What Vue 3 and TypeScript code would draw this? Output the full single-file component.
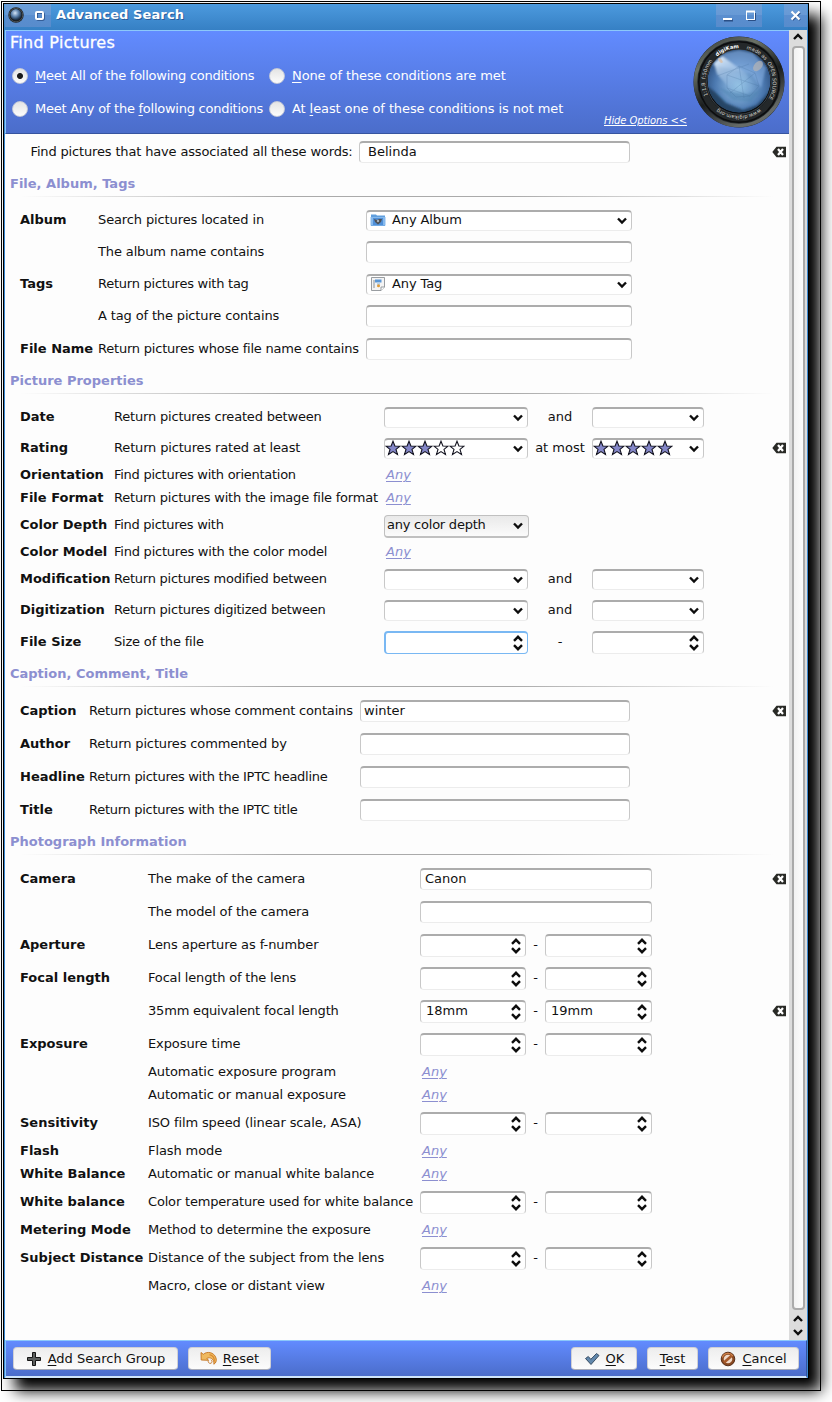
<script setup lang="ts">
type Kind = 'input' | 'combo' | 'button' | 'spin' | 'any' | 'range-combo' | 'range-spin'

interface Row {
  label?: string
  desc: string
  // letter tracking of the description, in hundredths of a pixel
  t: number
  kind: Kind
  h: number
  value?: string
  value2?: string
  sep?: string
  icon?: 'album' | 'tag'
  stars?: [number, number]
  clear?: boolean
  focus?: boolean
}

interface Section {
  id: string
  title: string
  rows: Row[]
}

const sections: Section[] = [
  {
    id: 'file',
    title: 'File, Album, Tags',
    rows: [
      { label: 'Album', desc: 'Search pictures located in', t: -12, kind: 'combo', h: 32, value: 'Any Album', icon: 'album' },
      { desc: 'The album name contains', t: -13, kind: 'input', h: 32 },
      { label: 'Tags', desc: 'Return pictures with tag', t: -25, kind: 'combo', h: 32, value: 'Any Tag', icon: 'tag' },
      { desc: 'A tag of the picture contains', t: -14, kind: 'input', h: 33 },
      { label: 'File Name', desc: 'Return pictures whose file name contains', t: -21, kind: 'input', h: 32 },
    ],
  },
  {
    id: 'props',
    title: 'Picture Properties',
    rows: [
      { label: 'Date', desc: 'Return pictures created between', t: -19, kind: 'range-combo', h: 31, sep: 'and' },
      { label: 'Rating', desc: 'Return pictures rated at least', t: -16, kind: 'range-combo', h: 27, sep: 'at most', stars: [3, 5], clear: true },
      { label: 'Orientation', desc: 'Find pictures with orientation', t: -27, kind: 'any', h: 23 },
      { label: 'File Format', desc: 'Return pictures with the image file format', t: -21, kind: 'any', h: 27 },
      { label: 'Color Depth', desc: 'Find pictures with', t: -28, kind: 'button', h: 27, value: 'any color depth' },
      { label: 'Color Model', desc: 'Find pictures with the color model', t: -23, kind: 'any', h: 27 },
      { label: 'Modification', desc: 'Return pictures modified between', t: -25, kind: 'range-combo', h: 31, sep: 'and' },
      { label: 'Digitization', desc: 'Return pictures digitized between', t: -24, kind: 'range-combo', h: 32, sep: 'and' },
      { label: 'File Size', desc: 'Size of the file', t: -19, kind: 'range-spin', h: 32, sep: '-', focus: true },
    ],
  },
  {
    id: 'caption',
    title: 'Caption, Comment, Title',
    rows: [
      { label: 'Caption', desc: 'Return pictures whose comment contains', t: -17, kind: 'input', h: 33, value: 'winter', clear: true },
      { label: 'Author', desc: 'Return pictures commented by', t: -14, kind: 'input', h: 33 },
      { label: 'Headline', desc: 'Return pictures with the IPTC headline', t: -27, kind: 'input', h: 33 },
      { label: 'Title', desc: 'Return pictures with the IPTC title', t: -28, kind: 'input', h: 32 },
    ],
  },
  {
    id: 'photo',
    title: 'Photograph Information',
    rows: [
      { label: 'Camera', desc: 'The make of the camera', t: -10, kind: 'input', h: 33, value: 'Canon', clear: true },
      { desc: 'The model of the camera', t: -13, kind: 'input', h: 33 },
      { label: 'Aperture', desc: 'Lens aperture as f-number', t: -8, kind: 'range-spin', h: 33, sep: '-' },
      { label: 'Focal length', desc: 'Focal length of the lens', t: -17, kind: 'range-spin', h: 33, sep: '-' },
      { desc: '35mm equivalent focal length', t: -18, kind: 'range-spin', h: 33, sep: '-', value: '18mm', value2: '19mm', clear: true },
      { label: 'Exposure', desc: 'Exposure time', t: -10, kind: 'range-spin', h: 28, sep: '-' },
      { desc: 'Automatic exposure program', t: -8, kind: 'any', h: 23 },
      { desc: 'Automatic or manual exposure', t: -10, kind: 'any', h: 28 },
      { label: 'Sensitivity', desc: 'ISO film speed (linear scale, ASA)', t: -12, kind: 'range-spin', h: 28, sep: '-' },
      { label: 'Flash', desc: 'Flash mode', t: -10, kind: 'any', h: 23 },
      { label: 'White Balance', desc: 'Automatic or manual white balance', t: -18, kind: 'any', h: 28 },
      { label: 'White balance', desc: 'Color temperature used for white balance', t: -18, kind: 'range-spin', h: 28, sep: '-' },
      { label: 'Metering Mode', desc: 'Method to determine the exposure', t: -12, kind: 'any', h: 28 },
      { label: 'Subject Distance', desc: 'Distance of the subject from the lens', t: -13, kind: 'range-spin', h: 28, sep: '-' },
      { desc: 'Macro, close or distant view', t: -18, kind: 'any', h: 28 },
    ],
  },
]

const starPath = 'M8 1.2 L9.9 6 L15 6.2 L11 9.4 L12.5 14.4 L8 11.6 L3.5 14.4 L5 9.4 L1 6.2 L6.1 6 Z'
</script>

<template>
  <div class="screen">
    <div class="outline"></div>
    <div class="window">
      <header class="titlebar">
        <div class="tb-group left">
          <svg width="16" height="16" viewBox="0 0 16 16">
            <defs>
              <radialGradient id="mini" cx="0.42" cy="0.36" r="0.6">
                <stop offset="0" stop-color="#d4e4f6" />
                <stop offset="0.55" stop-color="#5a80aa" />
                <stop offset="1" stop-color="#1c3048" />
              </radialGradient>
            </defs>
            <circle cx="8" cy="8" r="7.7" fill="#1b1f22" />
            <circle cx="8" cy="8" r="6.8" fill="none" stroke="#5d6468" stroke-width="0.7" />
            <circle cx="8" cy="7.6" r="5.6" fill="url(#mini)" />
          </svg>
          <svg class="sticky" width="10" height="10" viewBox="0 0 10 10">
            <rect x="2" y="2" width="7" height="7" rx="1" fill="none" stroke="#2a4f86" stroke-width="1.6" />
            <rect x="1" y="1" width="7" height="7" rx="1" fill="none" stroke="#fff" stroke-width="2" />
          </svg>
        </div>
        <span class="tb-title">Advanced Search</span>
        <div class="tb-group mid">
          <svg width="46" height="23" viewBox="0 0 46 23">
            <path d="M8 16.5H17" stroke="#2a4f86" stroke-width="2" />
            <path d="M7 15H16" stroke="#fff" stroke-width="2" />
            <path d="M32 16.5H39.500V9" stroke="#2a4f86" fill="none" />
            <rect x="30.500" y="7.500" width="8" height="8" fill="none" stroke="#fff" />
            <path d="M30 7.500H39" stroke="#fff" stroke-width="2" />
          </svg>
        </div>
        <div class="tb-group close">
          <svg width="23" height="23" viewBox="0 0 23 23">
            <path d="M8.500 8.500L16 16M16 8.500L8.500 16" stroke="#2a4f86" stroke-width="2.200" />
            <path d="M7.500 7.500L15.500 15.500M15.500 7.500L7.500 15.500" stroke="#fff" stroke-width="2.200" />
          </svg>
        </div>
      </header>

      <div class="body">
        <div class="main">
          <div class="head">
            <div class="head-left">
              <h1>Find Pictures</h1>
              <div class="radios">
                <span class="opt"><i class="radio on"></i><span class="tight"><u>M</u>eet All of the following conditions</span></span>
                <span class="opt"><i class="radio"></i><span><u>N</u>one of these conditions are met</span></span>
                <span class="opt"><i class="radio"></i><span class="tight">Meet Any of the <u>f</u>ollowing conditions</span></span>
                <span class="opt"><i class="radio"></i><span>At <u>l</u>east one of these conditions is not met</span></span>
              </div>
            </div>
            <a class="hide">Hide Options &lt;&lt;</a>
            <svg class="lens" width="94" height="94" viewBox="-47 -47 94 94">
              <defs>
                <linearGradient id="rim" x1="0" y1="0" x2="0.5" y2="1">
                  <stop offset="0" stop-color="#2e3335" />
                  <stop offset="0.3" stop-color="#6b7266" />
                  <stop offset="0.65" stop-color="#1a1d1e" />
                  <stop offset="1" stop-color="#666b68" />
                </linearGradient>
                <radialGradient id="glass" cx="0.5" cy="0.58" r="0.62">
                  <stop offset="0" stop-color="#93c3e4" />
                  <stop offset="0.3" stop-color="#78a5d2" />
                  <stop offset="0.62" stop-color="#4c79b0" />
                  <stop offset="0.85" stop-color="#34598a" />
                  <stop offset="1" stop-color="#1f3c5c" />
                </radialGradient>
                <linearGradient id="shine" x1="0.1" y1="0" x2="0.6" y2="1">
                  <stop offset="0" stop-color="#e6f2fd" />
                  <stop offset="1" stop-color="#8db8e4" stop-opacity="0" />
                </linearGradient>
                <filter id="soften" x="-20%" y="-20%" width="140%" height="140%"><feGaussianBlur stdDeviation="1.3" /></filter>
                <clipPath id="glassClip"><circle r="31.500" cy="-1" /></clipPath>
                <path id="ring" d="M0 33.800A33.800 33.800 0 1 1 0.010 33.800" />
                <path id="ring2" d="M0 -33.800A33.800 33.800 0 1 1 -0.010 -33.800" />
              </defs>
              <circle r="45.500" fill="#23282b" />
              <circle r="43.500" fill="none" stroke="url(#rim)" stroke-width="3.500" />
              <circle r="41" fill="#0c0d0e" />
              <circle r="39.500" fill="#24282a" />
              <circle r="33" fill="#0b0d0f" />
              <circle r="32.300" fill="none" stroke="#495157" stroke-width="0.800" />
              <g clip-path="url(#glassClip)">
                <circle r="31.500" cy="-1" fill="url(#glass)" />
                <g filter="url(#soften)">
                  <path d="M-27 -17L-14 -29L0 -32L14 -29L27 -14L22 6L12 -8L-3 -12Z" fill="#8ab4e8" opacity="0.550" />
                  <path d="M-25 -19L-17 -26L8 -8L10 14L-8 8L-22 -8Z" fill="url(#shine)" />
                  <path d="M-32 4L-24 10L-13 21L4 28L18 23L32 8V34H-32Z" fill="#213c5b" opacity="0.850" />
                  <path d="M-20 6L-6 18L12 20L22 8L8 12L-6 10Z" fill="#4b82ae" opacity="0.500" />
                </g>
                <g fill="none" stroke="#3f6996" stroke-width="0.600" opacity="0.350">
                  <path d="M0 -16L16 -9L20 4L11 14L-3 15L-12 6L-12 -7Z" />
                  <path d="M0 -16L5 16M16 -9L-9 11M20 4L-12 -7M11 14L-12 6M-22 -6L10 -18" />
                </g>
                <ellipse cx="19" cy="-16" rx="6" ry="3.800" transform="rotate(-48 19 -16)" fill="#b6b5b5" opacity="0.700" />
                <ellipse cx="-18.500" cy="-21.500" rx="3" ry="1.500" transform="rotate(50 -18.500 -21.500)" fill="#d6c5b7" />
              </g>
              <g class="lens-text">
                <text><textPath href="#ring" startOffset="18.500%">1:1,8</textPath></text>
                <text><textPath href="#ring" startOffset="26.300%">f:50mm</textPath></text>
                <text class="brand"><textPath href="#ring" startOffset="38.700%">digiKam</textPath></text>
                <text><textPath href="#ring2" startOffset="3.500%">made as</textPath></text>
                <text><textPath href="#ring2" startOffset="15.500%">OPEN SOURCE</textPath></text>
                <text><textPath href="#ring2" startOffset="39.500%">www.digikam.org</textPath></text>
              </g>
            </svg>
          </div>

          <div class="words">
            <label>Find pictures that have associated all these words:</label>
            <div class="field words-field">Belinda</div>
            <svg class="clear" width="14" height="12" viewBox="0 0 14 12">
              <path d="M0.300 6L4.500 0.800H14V11.200H4.500Z" fill="#292a26" />
              <path d="M6 3L11 9M11 3L6 9" stroke="#fff" stroke-width="2.200" />
            </svg>
          </div>

          <section v-for="s in sections" :key="s.id" :class="['group', s.id]">
            <h2>{{ s.title }}</h2>
            <div class="rule"></div>
            <div v-for="(r, i) in s.rows" :key="i" class="row" :style="{ height: r.h + 'px' }">
              <b class="label">{{ r.label }}</b>
              <span class="desc" :style="{ letterSpacing: r.t / 100 + 'px' }">{{ r.desc }}</span>
              <div class="ctl">
                <a v-if="r.kind === 'any'" class="any">Any</a>
                <div v-else-if="r.kind === 'input'" class="field wide">{{ r.value }}</div>
                <div v-else-if="r.kind === 'combo'" class="field combo wide">
                  <svg v-if="r.icon === 'album'" class="ico" width="16" height="16" viewBox="0 0 16 16">
                    <path d="M1 2.500H6L7 3.500H15V14H1Z" fill="#5f9edd" />
                    <path d="M0.500 5H15.500V13.500H0.500Z" fill="#86b9ec" />
                    <path d="M3 6H13V13H3Z" fill="#4f8fd8" />
                    <path d="M4 7L7 8L9 7H12L11 10L8 12.500L5 10Z" fill="#4d5157" />
                    <circle cx="8" cy="9" r="1.200" fill="#a9b2bc" />
                  </svg>
                  <svg v-else class="ico" width="16" height="16" viewBox="0 0 16 16">
                    <path d="M1.500 1.500H14.500V11L11 14.500H1.500Z" fill="#f4f4f4" stroke="#8d9296" stroke-width="0.900" />
                    <path d="M14.500 11H11V14.500" fill="#fff" stroke="#8d9296" stroke-width="0.900" />
                    <path d="M3 4H5V12H3Z" fill="#bfc3c6" />
                    <path d="M5 3.500H11.500V6.500H5Z" fill="#5a97d6" />
                    <path d="M7 6.500H10V9.500H7Z" fill="#b8d3ea" />
                    <circle cx="8.500" cy="9.800" r="1.500" fill="#e09a35" />
                  </svg>
                  <span class="combo-text">{{ r.value }}</span>
                  <svg class="chev" width="10" height="8" viewBox="0 0 10 8"><path d="M1 1.500L5 5.500L9 1.500" /></svg>
                </div>
                <div v-else-if="r.kind === 'button'" class="pushcombo">
                  <span>{{ r.value }}</span>
                  <svg class="chev" width="10" height="8" viewBox="0 0 10 8"><path d="M1 1.500L5 5.500L9 1.500" /></svg>
                </div>
                <template v-else>
                  <div
                    v-for="n in 2"
                    :key="n"
                    :class="['field', r.kind === 'range-combo' ? 'combo' : 'spin', n === 1 ? 'a' : 'b', { focus: r.focus && n === 1 }]"
                  >
                    <span v-if="r.stars" class="stars">
                      <svg v-for="k in 5" :key="k" width="16" height="16" viewBox="0 0 16 16">
                        <path :d="starPath" :fill="k <= r.stars[n - 1] ? '#8487c8' : '#fff'" stroke="#141420" stroke-width="1.100" />
                      </svg>
                    </span>
                    <span v-else>{{ n === 1 ? r.value : r.value2 }}</span>
                    <svg v-if="r.kind === 'range-combo'" class="chev" width="10" height="8" viewBox="0 0 10 8"><path d="M1 1.500L5 5.500L9 1.500" /></svg>
                    <svg v-else class="chev" width="10" height="16" viewBox="0 0 10 16">
                      <path d="M1 5.800L5 1.800L9 5.800" />
                      <path d="M1 10.200L5 14.200L9 10.200" />
                    </svg>
                  </div>
                  <span class="sep">{{ r.sep }}</span>
                </template>
              </div>
              <svg v-if="r.clear" class="clear" width="14" height="12" viewBox="0 0 14 12">
                <path d="M0.300 6L4.500 0.800H14V11.200H4.500Z" fill="#292a26" />
                <path d="M6 3L11 9M11 3L6 9" stroke="#fff" stroke-width="2.200" />
              </svg>
            </div>
          </section>
        </div>

        <div class="scroll">
          <svg class="sarrow top" width="10" height="8" viewBox="0 0 10 8"><path d="M1 6L5 2L9 6" /></svg>
          <div class="slider"></div>
          <svg class="sarrow" width="10" height="8" viewBox="0 0 10 8"><path d="M1 6L5 2L9 6" /></svg>
          <svg class="sarrow down" width="10" height="8" viewBox="0 0 10 8"><path d="M1 2L5 6L9 2" /></svg>
        </div>
      </div>

      <footer class="foot">
        <button class="btn add">
          <svg width="16" height="16" viewBox="0 0 16 16">
            <path d="M6.500 1.500H9.500V6.500H14.500V9.500H9.500V14.500H6.500V9.500H1.500V6.500H6.500Z" fill="#5c5f5e" stroke="#151515" />
          </svg>
          <span><u>A</u>dd Search Group</span>
        </button>
        <button class="btn reset">
          <svg width="17" height="16" viewBox="0 0 17 16">
            <path d="M1 1.500L3.300 3.300C7 0 14 1 16 7C17 10 15.500 12.500 13.800 13.200C14.500 10 12.500 7.300 9.500 6.800C8.500 6.700 7.500 7 6.800 7.500L8.500 9.300L1.200 9Z" fill="#efb95f" stroke="#c47420" stroke-width="0.900" />
            <path d="M9.500 3.700C12.800 4.500 14.500 7 14.300 10.500" fill="none" stroke="#d98b32" stroke-width="1.200" />
            <path d="M8.500 9.500C7.500 11 9 12.800 11 12.300C12.500 11.500 12.300 9.500 10.800 8.800" fill="none" stroke="#c98035" />
          </svg>
          <span><u>R</u>eset</span>
        </button>
        <span class="grow"></span>
        <button class="btn ok">
          <svg width="16" height="16" viewBox="0 0 16 16">
            <path d="M1.500 7.500L4.300 5.500L6.800 8.300L12.500 2.500L15 4.500L7 13.500Z" fill="#6288ac" stroke="#2c4258" stroke-width="0.900" />
          </svg>
          <span><u>O</u>K</span>
        </button>
        <button class="btn test"><span><u>T</u>est</span></button>
        <button class="btn cancel">
          <svg width="16" height="16" viewBox="0 0 16 16">
            <circle cx="8" cy="8" r="6.800" fill="#8a4a22" stroke="#4c2410" stroke-width="0.900" />
            <circle cx="8" cy="8" r="4.300" fill="#f0d9c8" />
            <path d="M4 11.500L12 4.500" stroke="#a75a2a" stroke-width="2.800" />
            <path d="M2.300 6.500A6 6 0 0 1 13 5" fill="none" stroke="#d0824a" stroke-width="1.300" />
          </svg>
          <span><u>C</u>ancel</span>
        </button>
      </footer>
    </div>
  </div>
</template>

<style>
html,
body {
  margin: 0;
  background: #fff;
}
</style>

<style scoped>
.screen {
  position: relative;
  width: 832px;
  height: 1402px;
  overflow: hidden;
  background: #fff;
  font-family: 'DejaVu Sans', sans-serif;
  font-size: 13px;
  color: #111;
  padding: 3px 0 0 3px;
  box-sizing: border-box;
}
.screen * {
  box-sizing: border-box;
}
.outline {
  position: absolute;
  z-index: 2;
  left: 1px;
  top: 1px;
  width: 820px;
  height: 1390px;
  border: 1px solid #000;
}
.window {
  position: relative;
  width: 806px;
  height: 1376px;
  border: 1px solid #000;
  box-shadow: 12px 12px 14px #000;
  background: #3b88d0;
  display: flex;
  flex-direction: column;
}
.titlebar {
  height: 26px;
  flex: none;
  display: flex;
  align-items: flex-start;
  padding-right: 1px;
  background: linear-gradient(#4c9ade, #3680c4);
}
.tb-group {
  height: 23px;
  background: linear-gradient(#6c9fd8 0, #6799d5 50%, #5a8ecf 50%, #588ccc);
}
.tb-group.left {
  width: 46px;
  margin-left: 1px;
  padding: 3px 0 0 3px;
  display: flex;
}
.sticky {
  margin: 4px 0 0 11px;
}
.tb-title {
  margin-left: 5px;
  line-height: 21px;
  font-weight: bold;
  letter-spacing: 0.1px;
  color: #fff;
  text-shadow: 1px 1px 0 #2a5c9a;
  flex: 1;
}
.tb-group.mid {
  width: 46px;
}
.tb-group.close {
  width: 23px;
  margin-left: 22px;
}
.tb-group svg {
  display: block;
  flex: none;
}
.body {
  flex: 1;
  min-height: 0;
  display: flex;
  margin-left: 1px;
  margin-right: 1px;
  background: #fdfdfd;
}
.main {
  width: 784px;
  flex: none;
}
.head {
  height: 104px;
  position: relative;
  border-top: 1px solid #8cc8fa;
  border-left: 1px solid #8cc8fa;
  border-bottom: 1px solid #36549f;
  background: linear-gradient(#628bff, #4b6dca);
  color: #fff;
  display: flex;
}
.head-left {
  width: 598px;
  flex: none;
  padding-left: 4px;
}
h1 {
  margin: 1px 0 0;
  font-size: 16px;
  line-height: 21px;
  font-weight: normal;
  letter-spacing: 0.3px;
  -webkit-text-stroke: 0.3px #fff;
}
.radios {
  display: grid;
  grid-template-columns: 257px 1fr;
  grid-auto-rows: 33px;
  margin: 6px 0 0 2px;
}
.opt {
  display: flex;
  align-items: center;
  white-space: nowrap;
  letter-spacing: -0.1px;
}
.tight {
  letter-spacing: -0.25px;
}
.radio {
  width: 16px;
  height: 16px;
  border-radius: 50%;
  flex: none;
  margin-right: 7px;
  border: 1px solid #c3c8d8;
  background: linear-gradient(#e4e4e4, #fcfcfc);
}
.radio.on {
  background: radial-gradient(circle, #1a1a1a 0 2.500px, transparent 3.500px), linear-gradient(#e4e4e4, #fcfcfc);
}
u {
  text-underline-offset: 2px;
  text-decoration-thickness: 1px;
}
.hide {
  align-self: flex-end;
  font-size: 10px;
  letter-spacing: -0.1px;
  line-height: 14px;
  font-style: italic;
  text-decoration: underline;
  white-space: nowrap;
  margin-bottom: 5px;
  width: 84px;
}
.lens {
  margin: 4px 0 0 4px;
  flex: none;
}
.lens-text {
  font-size: 5.200px;
  fill: #d2d2cc;
}
.brand {
  font-weight: bold;
  fill: #fff;
}
.words {
  display: flex;
  height: 39px;
  padding-top: 7px;
}
.words label {
  margin-left: 25.500px;
  width: 328.500px;
  line-height: 21px;
  white-space: nowrap;
  letter-spacing: -0.155px;
}
.field {
  height: 22px;
  flex: none;
  line-height: 17px;
  padding-left: 4px;
  border: 1px solid #c8c8c8;
  border-top: 2px solid #acacac;
  border-bottom-color: #ececec;
  border-radius: 4px;
  background: #fff;
  white-space: nowrap;
}
.words-field {
  width: 271px;
  padding-left: 8px;
}
.clear {
  margin: 5px 3px 0 auto;
  flex: none;
}
.group {
  position: relative;
}
h2 {
  margin: 0;
  padding-left: 5px;
  font-size: 13px;
  line-height: 22px;
  font-weight: bold;
  height: 23px;
  color: #8c8fd0;
}
.rule {
  height: 1px;
  margin: 0 15px 12px 15px;
  background: linear-gradient(90deg, transparent, #aaa 35%, #aaa 65%, transparent);
}
.caption .rule,
.photo .rule {
  margin-bottom: 13px;
}
.row {
  display: flex;
  padding-left: 15px;
  line-height: 22px;
}
.label {
  flex: none;
  white-space: nowrap;
}
.desc {
  flex: none;
  white-space: nowrap;
}
.file .label { width: 78px; }
.file .desc { width: 268px; }
.props .label { width: 94px; }
.props .desc { width: 270px; }
.caption .label { width: 69px; }
.caption .desc { width: 271px; }
.photo .label { width: 128px; }
.photo .desc { width: 272px; }
.file .wide { width: 266px; }
.caption .wide { width: 270px; padding-left: 3px; }
.photo .wide { width: 232px; }
.ctl {
  display: flex;
  align-items: flex-start;
  flex: none;
}
.combo {
  height: 21px;
  margin-top: 1px;
  display: flex;
  line-height: 15px;
}
.ico {
  margin: 0 6px 0 -1px;
}
.combo-text {
  letter-spacing: -0.1px;
}
.chev,
.sarrow {
  fill: none;
  stroke: #0d0d0d;
  stroke-width: 2.400;
}
.combo .chev {
  margin: 5px 4px 0 auto;
}
.spin {
  height: 23px;
  display: flex;
  padding-left: 5px;
}
.spin .chev {
  margin: 2px 4px 0 auto;
}
.props .a { width: 144px; }
.props .b { width: 112px; order: 3; }
.props .sep { width: 64px; }
.photo .a { width: 106px; }
.photo .b { width: 107px; order: 3; }
.photo .sep { width: 19px; }
.sep {
  order: 2;
  text-align: center;
  white-space: nowrap;
}
.focus {
  border: 2px solid #79b8f3;
  border-right-width: 1px;
  border-bottom-width: 1px;
}
.stars {
  display: flex;
  margin: 0 0 0 -4px;
}
.pushcombo {
  width: 145px;
  height: 23px;
  display: flex;
  margin-top: 1px;
  padding-left: 2px;
  line-height: 17px;
  letter-spacing: -0.23px;
  border: 1px solid #c0c0c0;
  border-bottom-width: 2px;
  border-radius: 4px;
  background: linear-gradient(#e9e9e9, #fbfbfb);
}
.pushcombo .chev {
  margin: 6px 5px 0 auto;
}
.any {
  margin-left: 2px;
  font-style: italic;
  text-decoration: underline;
  text-underline-offset: 2px;
  text-decoration-thickness: 1px;
  color: #8c8fd0;
}
.scroll {
  width: 18px;
  background: #dcdcdc;
  display: flex;
  flex-direction: column;
  align-items: center;
}
.sarrow {
  flex: none;
  margin-top: 5px;
}
.sarrow.top {
  margin: 3px 0 5px;
}
.slider {
  flex: 1;
  width: 13px;
  border: 2px solid #aaa;
  border-radius: 4px;
  background: linear-gradient(90deg, #f2f2f2, #fdfdfd);
}
.sarrow.down {
  margin-bottom: 4px;
}
.foot {
  flex: none;
  height: 38px;
  display: flex;
  border: 1px solid #8cc8fa;
  border-right-color: #36549f;
  border-bottom: 2px solid #cfe5fb;
  background: linear-gradient(#628bff, #4b6dca);
  margin: 0 1px;
  padding: 6px 6px 0 7px;
}
.btn {
  font: inherit;
  color: #111;
  height: 23px;
  padding: 0;
  border: 1px solid #d0d0d4;
  border-bottom: 1px solid #a9acb8;
  border-radius: 4px;
  background: linear-gradient(#ededed, #fcfcfc);
  display: flex;
  align-items: center;
  justify-content: center;
  white-space: nowrap;
  gap: 6px;
}
.btn span {
  position: relative;
  line-height: 20px;
}
.grow {
  flex: 1;
}
.add { width: 165px; }
.reset { width: 83px; margin-left: 10px; }
.ok { width: 66px; }
.test { width: 51px; margin-left: 10px; }
.cancel { width: 91px; margin-left: 10px; margin-right: 1px; }
</style>
